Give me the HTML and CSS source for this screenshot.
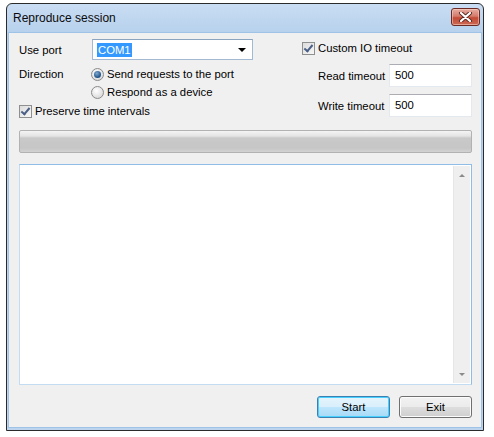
FILE: index.html
```html
<!DOCTYPE html>
<html>
<head>
<meta charset="utf-8">
<link rel="stylesheet" href="styles.css">
</head>
<body>
<div class="window">
  <div class="titlebar">
    <span class="title">Reproduce session</span>
    <span class="close">
      <svg width="17" height="10" viewBox="0 0 17 10">
        <path d="M4 1 L13 9 M13 1 L4 9" stroke="#5b2a22" stroke-width="4" stroke-linecap="round"/>
        <path d="M4 1 L13 9 M13 1 L4 9" stroke="#fff" stroke-width="2.2" stroke-linecap="round"/>
      </svg>
    </span>
  </div>
  <div class="client">
    <div class="top">
      <div class="left">
        <div class="port-row">
          <span class="label port-label">Use port</span>
          <div class="combo">
            <span class="sel">COM1</span>
            <span class="arrow"></span>
          </div>
        </div>
        <div class="dir-row">
          <span class="label dir-label">Direction</span>
          <div class="radios">
            <div class="opt"><span class="radio on"></span><span>Send requests to the port</span></div>
            <div class="opt"><span class="radio"></span><span>Respond as a device</span></div>
          </div>
        </div>
        <div class="opt preserve"><span class="check on"></span><span>Preserve time intervals</span></div>
      </div>
      <div class="right">
        <div class="opt custom"><span class="check on"></span><span>Custom IO timeout</span></div>
        <div class="field">
          <span class="label">Read timeout</span>
          <div class="edit">500</div>
        </div>
        <div class="field">
          <span class="label">Write timeout</span>
          <div class="edit">500</div>
        </div>
      </div>
    </div>
    <div class="progress"></div>
    <div class="log">
      <div class="scroll">
        <span class="up"></span>
        <span class="down"></span>
      </div>
    </div>
    <div class="buttons">
      <div class="btn default">Start</div>
      <div class="btn">Exit</div>
    </div>
  </div>
</div>
</body>
</html>
```

FILE: styles.css
```css
html, body {
  margin: 0;
  padding: 0;
  background: #ffffff;
}

body {
  font-family: "Liberation Sans", "DejaVu Sans", sans-serif;
  font-size: 11.3px;
  color: #000;
}

.window {
  margin: 3px 0 0 6px;
  width: 476px;
  height: 426px;
  border: 1px solid #2b2b2b;
  border-radius: 6px 6px 0 0;
  background: linear-gradient(#c9ddf3, #b6d0ec 30px, #bcd4ee);
  display: flex;
  flex-direction: column;
}

.titlebar {
  height: 28px;
  display: flex;
  align-items: center;
  padding: 0 3px 0 6px;
}

.title {
  flex: 1;
  font-size: 12px;
  color: #0b0b0b;
}

.close {
  width: 27px;
  height: 16px;
  border: 1px solid #6b2a23;
  border-radius: 3px;
  background: linear-gradient(#e6ada2, #d57b6b 45%, #c24a35 55%, #cc6a55);
  display: flex;
  align-items: center;
  justify-content: center;
  margin-top: -3px;
  box-shadow: inset 0 0 0 1px rgba(255, 220, 210, 0.5);
}

.client {
  flex: 1;
  margin: 0 1px 2px 1px;
  border: 1px solid #9ec3e6;
  background: #f0f0f0;
  padding: 0 9px 0 10px;
  display: flex;
  flex-direction: column;
}

.top {
  display: flex;
  height: 88px;
}

.left {
  width: 283px;
  display: flex;
  flex-direction: column;
}

.label {
  white-space: nowrap;
}

.port-row {
  margin-top: 6px;
  display: flex;
  align-items: center;
  height: 21px;
}

.port-label {
  width: 73px;
}

.combo {
  width: 155px;
  height: 19px;
  border: 1px solid #a3b9d2;
  border-top-color: #8aa3bf;
  background: #fff;
  display: flex;
  align-items: center;
  padding-left: 4px;
  box-sizing: content-box;
}

.sel {
  background: #3399ff;
  color: #fff;
  padding: 0 1px;
  line-height: 14px;
  flex: none;
}

.arrow {
  margin-left: auto;
  margin-right: 6px;
  width: 0;
  height: 0;
  border-left: 4px solid transparent;
  border-right: 4px solid transparent;
  border-top: 4px solid #000;
}

.dir-row {
  margin-top: 5px;
  display: flex;
}

.dir-label {
  width: 72px;
  line-height: 18px;
}

.radios {
  display: flex;
  flex-direction: column;
}

.opt {
  height: 18px;
  display: flex;
  align-items: center;
  gap: 3px;
  white-space: nowrap;
}

.radio {
  width: 11px;
  height: 11px;
  border: 1px solid #8b8b8b;
  border-radius: 50%;
  background: radial-gradient(circle at 40% 35%, #ffffff, #e2e2e2 60%, #cfcfcf);
  position: relative;
  flex: none;
}

.radio.on::after {
  content: "";
  position: absolute;
  left: 2px;
  top: 2px;
  width: 7px;
  height: 7px;
  border-radius: 50%;
  background: radial-gradient(circle at 40% 35%, #7fa9d0, #1d4f84 70%);
}

.check {
  width: 11px;
  height: 11px;
  border: 1px solid #8e8f8f;
  background: linear-gradient(135deg, #dcdcdc, #f7f7f7);
  position: relative;
  flex: none;
}

.check.on::after {
  content: "";
  position: absolute;
  left: 3px;
  top: 0px;
  width: 3px;
  height: 7px;
  border-right: 2px solid #4a5f86;
  border-bottom: 2px solid #4a5f86;
  transform: rotate(40deg);
}

.preserve {
  margin-top: 1px;
}

.right {
  flex: 1;
  display: flex;
  flex-direction: column;
}

.custom {
  margin-top: 6px;
}

.field {
  display: flex;
  align-items: center;
  justify-content: space-between;
  padding-left: 16px;
  height: 23px;
  margin-top: 7px;
}

.edit {
  width: 76px;
  height: 21px;
  border: 1px solid #e3e9ef;
  border-top-color: #abadb3;
  background: #fff;
  padding-left: 5px;
  line-height: 21px;
  box-sizing: content-box;
}

.progress {
  margin-top: 9px;
  height: 21px;
  border: 1px solid #b2b2b2;
  border-radius: 2px;
  background: linear-gradient(#f4f4f4, #e4e4e4 5px, #c9c9c9 7px, #c6c6c6 17px, #d2d2d2);
}

.log {
  margin-top: 11px;
  height: 219px;
  border: 1px solid #8fbde6;
  border-left-color: #c4dcf2;
  border-bottom-color: #c4dcf2;
  background: #fff;
  display: flex;
  justify-content: flex-end;
}

.scroll {
  width: 16px;
  margin: 1px 1px 1px 0;
  background: #efefef;
  border-left: 1px solid #e6e6e6;
  display: flex;
  flex-direction: column;
  justify-content: space-between;
  align-items: center;
  padding: 8px 0 7px;
}

.up, .down {
  width: 0;
  height: 0;
  border-left: 3px solid transparent;
  border-right: 3px solid transparent;
}

.up {
  border-bottom: 3px solid #8a8a8a;
}

.down {
  border-top: 3px solid #8a8a8a;
}

.buttons {
  margin-top: 11px;
  display: flex;
  justify-content: flex-end;
  gap: 9px;
}

.btn {
  width: 71px;
  height: 20px;
  border: 1px solid #707070;
  border-radius: 3px;
  background: linear-gradient(#f2f2f2, #ebebeb 50%, #dddddd 51%, #cfcfcf);
  box-shadow: inset 0 0 0 1px #fcfcfc;
  text-align: center;
  line-height: 20px;
}

.btn.default {
  border-color: #3c7fb1;
  background: linear-gradient(#e5f4fc, #d9effc 50%, #bee6fd 51%, #a7d9f5);
  box-shadow: inset 0 0 0 1px #48d0ff;
}
```
